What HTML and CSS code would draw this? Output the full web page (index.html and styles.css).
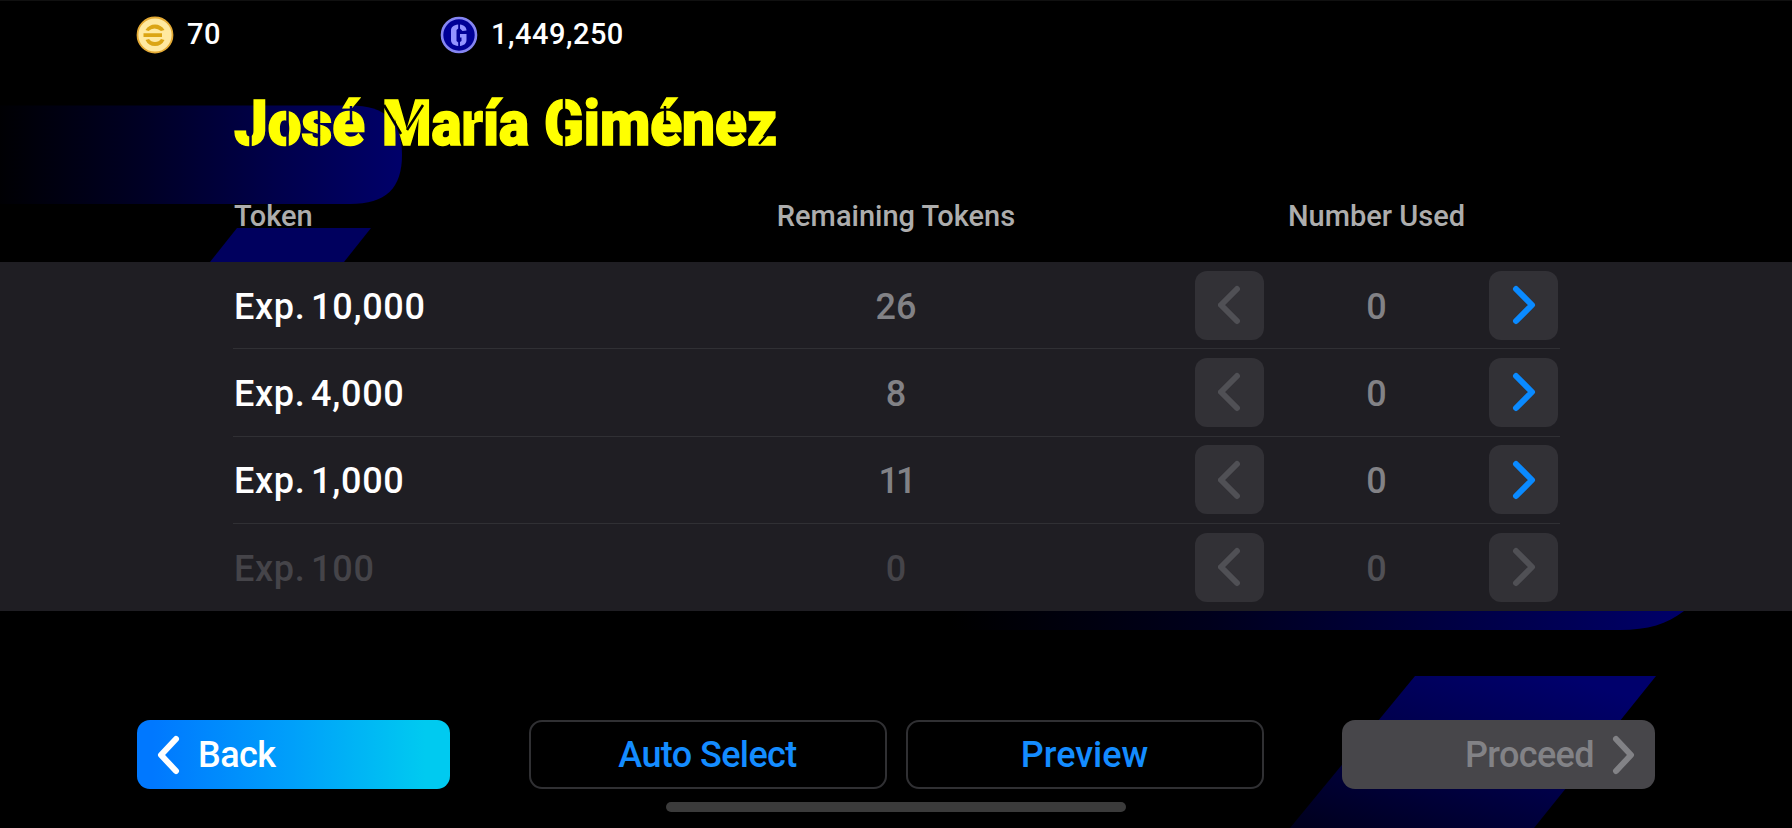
FILE: index.html
```
<!doctype html>
<html lang="en">
  <head>
    <meta charset="utf-8">
    <title>Exp. Tokens</title>
    <link rel="stylesheet" href="styles.css">
  </head>
  <body>
    <svg class="backdrop" viewBox="0 0 1792 828">
      <defs>
        <linearGradient id="fade-a"><stop offset="0" stop-color="#000003"/><stop offset=".35" stop-color="#000024"/><stop offset=".7" stop-color="#00004c"/><stop offset="1" stop-color="#00006a"/></linearGradient>
        <linearGradient id="fade-b"><stop offset="0" stop-color="#000"/><stop offset=".35" stop-color="#00001c"/><stop offset="1" stop-color="#00006a"/></linearGradient>
        <linearGradient id="fade-c" x1="0" y1="1" x2=".75" y2="0"><stop offset="0" stop-color="#00001c"/><stop offset=".5" stop-color="#000048"/><stop offset="1" stop-color="#00006c"/></linearGradient>
      </defs>
      <path fill="url(#fade-a)" d="M0 105.500H350C386 105.500 402 122 402 155S386 204 350 204H0Z"/>
      <path fill="#00005e" d="M237 228H371L344 262H210Z"/>
      <path fill="url(#fade-b)" d="M950 600H1690L1684 611C1667 624 1648 630 1620 630H950Z"/>
      <path fill="url(#fade-c)" d="M1415 676H1656L1534 828H1290Z"/>
    </svg>

    <header class="wallet">
      <div class="coins">
        <svg class="coin" viewBox="0 0 38 38">
          <circle cx="19" cy="19" r="17.500" fill="#ffe9a0" stroke="#e5ab35" stroke-width="1.800"/>
          <path fill="#dba514" d="M9.500 14Q13 8.500 19 8.500T28.500 14L25 15Q22 12.500 18.500 12.500T12.500 15ZM7.500 17.200H26V21H7.500ZM9.500 24L13 23Q15 26 19 26T25 23L28.500 24Q25.500 30 19 30T9.500 24Z"/>
        </svg>
        <span>70</span>
      </div>
      <div class="gp">
        <svg class="coin" viewBox="0 0 38 38">
          <circle cx="19" cy="19" r="17" fill="#000096" stroke="#8585f2" stroke-width="2.600"/>
          <path fill="#9393ff" d="M18.200 8.500V12.500L16.500 14V25L18.200 26.500V30C13.500 29.500 11 27.500 11 24V15C11 11 13.500 9 18.200 8.500ZM20 8.500C24 9 26.500 11 26.500 14.500L22.500 15L20 12.500ZM20 18H26.500V24C26.500 27.500 24 29.500 20 30V26L21.500 25V21.500H20Z"/>
        </svg>
        <span>1,449,250</span>
      </div>
    </header>

    <h1 class="player">
      <svg class="player-name" viewBox="0 0 600 102">
        <mask id="stencil">
          <rect width="600" height="102" fill="#fff"/>
          <path class="cuts" d="M17.500 62V82M54.500 38V80M86 38V80M118 38V56M151 37L168 66M190 37L174 62M240 40V52M331 28V82M432 38V56M499 38V56M526 76L540 60"/>
        </mask>
        <g mask="url(#stencil)">
          <text x="1" y="77" textLength="131" lengthAdjust="spacingAndGlyphs">José</text>
          <text x="149" y="77" textLength="147" lengthAdjust="spacingAndGlyphs">María</text>
          <text x="311" y="77" textLength="233" lengthAdjust="spacingAndGlyphs">Giménez</text>
        </g>
      </svg>
    </h1>

    <div class="row head">
      <span>Token</span>
      <span class="remaining">Remaining Tokens</span>
      <span class="used">Number Used</span>
    </div>

    <main class="tokens">
      <div class="row">
        <span class="name">Exp. 10,000</span>
        <span class="remaining">26</span>
        <div class="stepper">
          <button disabled><svg class="chevron" viewBox="0 0 24 40"><path d="M19 4L3 20L19 36"/></svg></button>
          <span>0</span>
          <button><svg class="chevron" viewBox="0 0 24 40"><path d="M4 4L20 20L4 36"/></svg></button>
        </div>
      </div>
      <div class="row">
        <span class="name">Exp. 4,000</span>
        <span class="remaining">8</span>
        <div class="stepper">
          <button disabled><svg class="chevron" viewBox="0 0 24 40"><path d="M19 4L3 20L19 36"/></svg></button>
          <span>0</span>
          <button><svg class="chevron" viewBox="0 0 24 40"><path d="M4 4L20 20L4 36"/></svg></button>
        </div>
      </div>
      <div class="row">
        <span class="name">Exp. 1,000</span>
        <span class="remaining ones">11</span>
        <div class="stepper">
          <button disabled><svg class="chevron" viewBox="0 0 24 40"><path d="M19 4L3 20L19 36"/></svg></button>
          <span>0</span>
          <button><svg class="chevron" viewBox="0 0 24 40"><path d="M4 4L20 20L4 36"/></svg></button>
        </div>
      </div>
      <div class="row empty">
        <span class="name">Exp. 100</span>
        <span class="remaining">0</span>
        <div class="stepper">
          <button disabled><svg class="chevron" viewBox="0 0 24 40"><path d="M19 4L3 20L19 36"/></svg></button>
          <span>0</span>
          <button disabled><svg class="chevron" viewBox="0 0 24 40"><path d="M4 4L20 20L4 36"/></svg></button>
        </div>
      </div>
    </main>

    <footer class="actions">
      <button class="back"><svg class="chevron" viewBox="0 0 24 40"><path d="M20 4L5 20L20 36"/></svg><span>Back</span></button>
      <div class="middle">
        <button class="auto">Auto Select</button>
        <button class="preview">Preview</button>
      </div>
      <button class="proceed" disabled><span>Proceed</span><svg class="chevron" viewBox="0 0 24 40"><path d="M4 4L19 20L4 36"/></svg></button>
    </footer>
    <div class="home-bar"></div>
  </body>
</html>
```

FILE: styles.css
```
* { margin: 0; padding: 0; box-sizing: border-box; }

body {
  width: 1792px;
  height: 828px;
  overflow: hidden;
  position: relative;
  background: #000;
  color: #fff;
  font: 500 36px Roboto, "Liberation Sans", sans-serif;
}

button { border: 0; font: inherit; color: inherit; }
svg { display: block; }

.backdrop {
  position: absolute;
  top: 0;
  left: 0;
  width: 1792px;
  height: 828px;
  z-index: -1;
}

.wallet {
  display: flex;
  height: 68px;
  padding: 0 136px;
  border-top: 1px solid #101010;
  font-size: 29px;
}
.wallet div { display: flex; align-items: center; gap: 13px; }
.wallet span { padding-bottom: 2px; letter-spacing: .5px; }
.coins { width: 304px; }
.coin { width: 38px; height: 38px; }

.player { height: 102px; padding-left: 233px; }
.player-name { width: 600px; height: 102px; }
.player-name text {
  font: 900 63px Roboto, sans-serif;
  fill: #ff0;
  stroke: #ff0;
  stroke-width: 1.5;
}
.cuts { fill: none; stroke: #000; stroke-width: 2.5; }

.row {
  display: grid;
  grid-template-columns: 482px 362px 363px;
  align-items: center;
  height: 87.25px;
  border-bottom: 1px solid #303034;
}
.row > :last-child { margin-left: 118px; width: 363px; }
.row > span:first-child { padding-left: 1px; }
.remaining { text-align: center; color: #828286; }
.name { word-spacing: -4px; letter-spacing: .7px; }
.tokens span { padding-top: 3px; }
.ones { letter-spacing: -3px; }

.head {
  height: 92px;
  margin-left: 233px;
  border: 0;
  font-size: 29px;
  color: #adadad;
}
.head .remaining { color: #adadad; }
.used { text-align: center; }

.tokens {
  height: 349px;
  padding: 0 232px 0 233px;
  background: #1f1e23;
}
.tokens .row:last-child { border: 0; }

.stepper {
  display: flex;
  align-items: center;
  justify-content: space-between;
  color: #828286;
}
.stepper button {
  display: flex;
  align-items: center;
  justify-content: center;
  width: 69px;
  height: 69px;
  border-radius: 12px;
  background: #323136;
  color: #0a8aff;
}
.stepper button:disabled { color: #505055; }
.empty, .empty .remaining { color: #454449; }
.empty .stepper { color: #505055; }

.chevron { width: 24px; height: 40px; }
.chevron path {
  fill: none;
  stroke: currentColor;
  stroke-width: 6;
  stroke-linecap: round;
  stroke-linejoin: round;
}

.actions {
  display: flex;
  justify-content: space-between;
  margin-top: 109px;
  padding: 0 137px;
}
.actions button {
  display: flex;
  align-items: center;
  height: 69px;
  border-radius: 13px;
  letter-spacing: -.6px;
}
.middle { display: flex; gap: 19px; }
.middle button {
  justify-content: center;
  width: 358px;
  border: 2px solid #303033;
  background: #000;
  color: #148cff;
}
.actions .preview { letter-spacing: 0; }
.back {
  width: 313px;
  gap: 18px;
  padding-left: 19px;
  background: linear-gradient(90deg, #0078ff 5%, #00a0fa 50%, #00caf0 92%);
}
.actions .proceed {
  justify-content: flex-end;
  width: 313px;
  gap: 18px;
  padding-right: 19px;
  background: #47464a;
  color: #828286;
}

.home-bar {
  width: 460px;
  height: 10px;
  margin: 13px auto 0;
  border-radius: 5px;
  background: #3b3b3b;
}
```
